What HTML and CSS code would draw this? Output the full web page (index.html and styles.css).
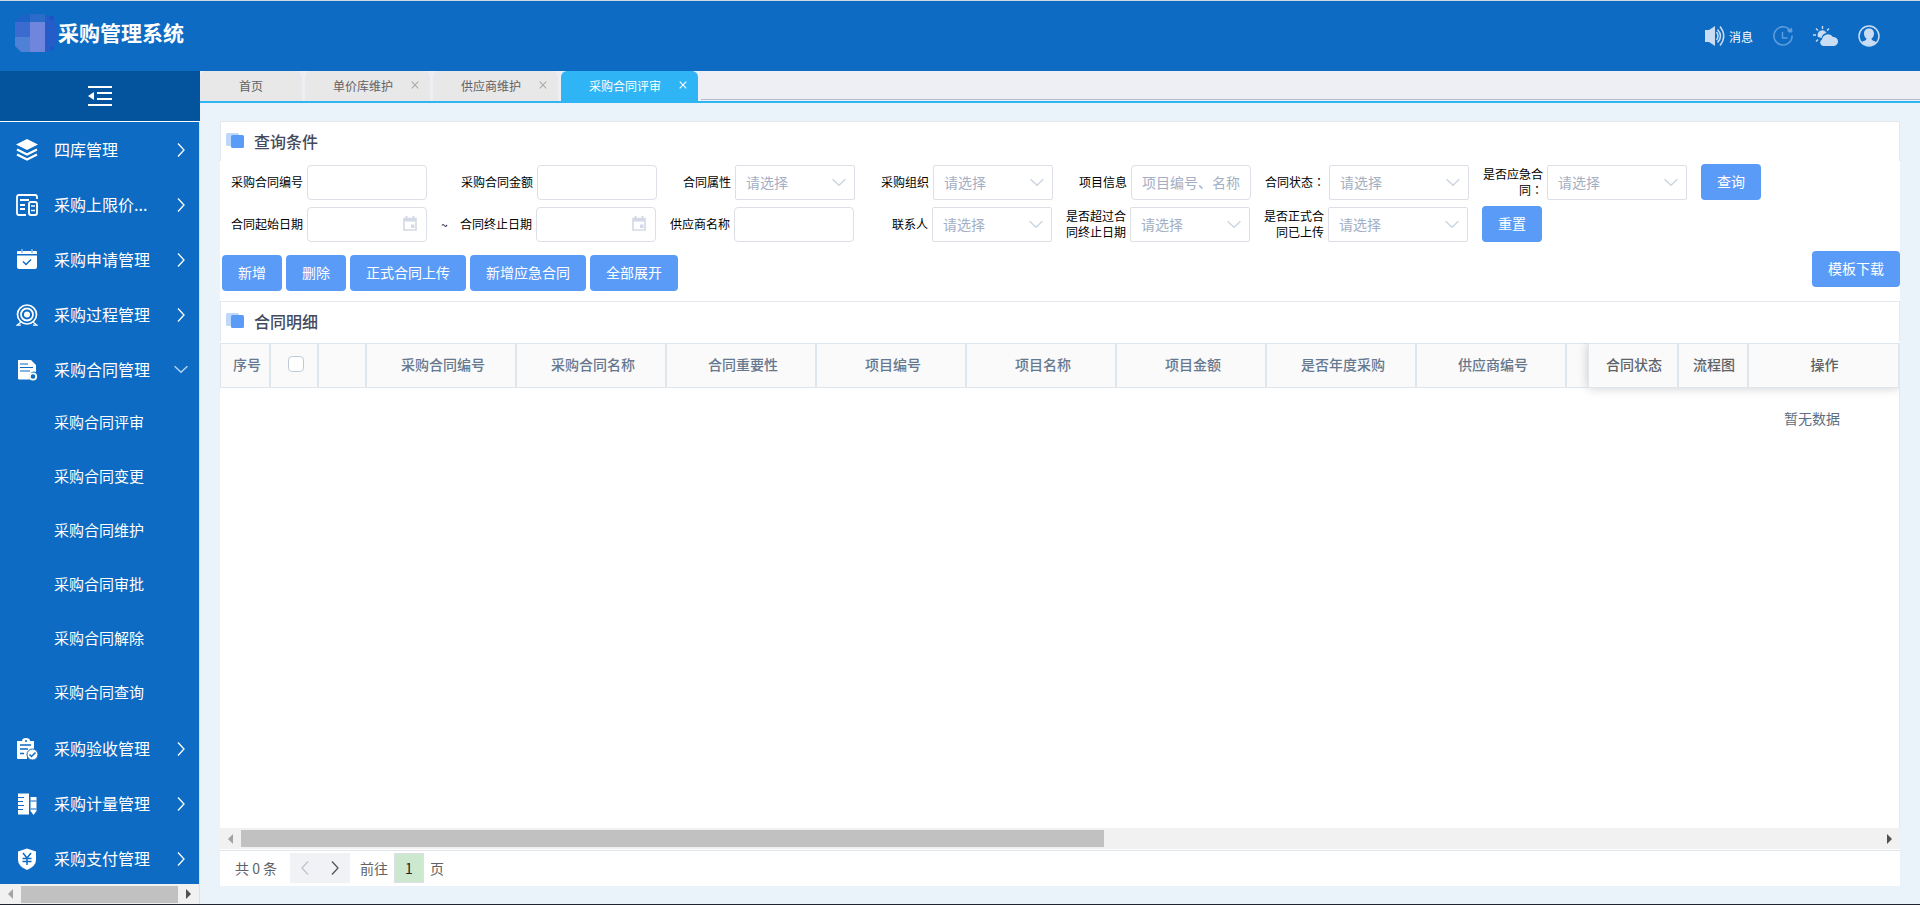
FILE: index.html
```html
<!DOCTYPE html>
<html lang="zh-CN">
<head>
<meta charset="utf-8">
<title>采购管理系统</title>
<link rel="stylesheet" href="styles.css">
</head>
<body>
<svg class="defs" width="0" height="0" aria-hidden="true">
  <symbol id="right" viewBox="0 0 10 16"><path d="M2 1.500L8 8L2 14.500" fill="none" stroke="currentColor" stroke-width="1.300"/></symbol>
  <symbol id="down" viewBox="0 0 14 9"><path d="M.6 1.200L7 7.300L13.400 1.200" fill="none" stroke="currentColor" stroke-width="1.500"/></symbol>
  <symbol id="close" viewBox="0 0 8 8"><path d="M.7.7L7.300 7.300M7.300.7L.7 7.300" fill="none" stroke="currentColor" stroke-width="1.100"/></symbol>
  <symbol id="cal" viewBox="0 0 14 15"><path d="M1 2.500h12v11.500H1z" fill="none" stroke="currentColor" stroke-width="1.600"/><path d="M1 2h12v3.500H1zM2.500 0h2v3h-2zM9.500 0h2v3h-2zM8 8.500h3.500V12H8z" fill="currentColor"/></symbol>
  <symbol id="squares" viewBox="0 0 18 15"><rect width="13" height="13" rx="1.500" fill="#bdd8fb"/><rect x="5" y="2" width="13" height="13" rx="1.500" fill="#5b9bf8"/></symbol>
</svg>
<header class="topbar">
  <div class="brand">
    <svg class="logo" width="43" height="38" viewBox="0 0 43 38"><path d="M0 8Q6 0 19 0Q43 1 43 19Q43 34 32 38H6L0 32z" fill="#245cc9"/><path d="M0 8Q6 0 15 0v8z" fill="#1b63c6"/><path d="M15 0h15v8H15z" fill="#2b6bca"/><path d="M34 2h5v4h-5zM36 33h3v3h-3z" fill="#2450c6"/><path d="M0 8h15v15H0z" fill="#3c6bd0"/><path d="M0 23h15v15H6L0 32z" fill="#4f82d6"/><path d="M15 8h15v30H15z" fill="#7086dc"/></svg>
    <h1 class="brand-name">采购管理系统</h1>
  </div>
  <nav class="tools">
    <a class="tool message" href="#"><svg width="20" height="20" viewBox="0 0 20 20"><path d="M0 4h4l6-4v20l-6-4H0z" fill="#c8dcf4"/><path d="M11.500 6q3 4 0 8M12.500 3.500q6 6.500 0 13M15 .5q7.500 9.500 0 19" fill="none" stroke="#c8dcf4" stroke-width="1.500"/></svg>消息</a>
    <a class="tool" href="#" aria-label="历史"><svg width="20" height="20" viewBox="0 0 20 20"><path d="M16.500 3.500a9.100 9.100 0 1 0 2.600 6" fill="none" stroke="#5d9cdd" stroke-width="1.600"/><path d="M14 3q3 1 5-1.500l.5 4.500q-2 1-4.500 0z" fill="#5d9cdd"/><path d="M9.500 6v6h5" fill="none" stroke="#5d9cdd" stroke-width="1.500"/></svg></a>
    <a class="tool" href="#" aria-label="天气"><svg width="25" height="20" viewBox="0 0 25 20"><path d="M5 11a4.500 4.500 0 1 1 8.500-4q-4 .5-5 5z" fill="#c8dcf4"/><path d="M9.500 0v3M3 2.500l2 2M0 9h3M16 2.500l-2 2M3 15.500l2-2" stroke="#c8dcf4" stroke-width="1.400"/><path d="M10 20a3.500 3.500 0 0 1-1-6.500 6 6 0 0 1 11-2.500 4.500 4.500 0 0 1 1 9z" fill="#c8dcf4"/></svg></a>
    <a class="tool" href="#" aria-label="用户"><svg width="22" height="22" viewBox="0 0 22 22"><circle cx="11" cy="11" r="10" fill="none" stroke="#c8dcf4" stroke-width="1.500"/><path d="M11 3.500c-3 0-5 2-5 5 0 2.500 1 4 2.500 5 0 2-3 2.500-5 3.500A9.500 9.500 0 0 0 18.500 17c-2-1-5-1.500-5-3.500C15 12.500 16 11 16 8.500c0-3-2-5-5-5z" fill="#c8dcf4"/></svg></a>
  </nav>
</header>
<div class="shell">
  <aside class="side">
    <button class="toggle" type="button" aria-label="收起菜单"><svg width="24" height="20" viewBox="0 0 24 20"><path d="M0 1h24M9 7h15M9 13h15M0 19h24" stroke="#fff" stroke-width="1.800"/><path d="M0 10l6-4v8z" fill="#fff"/></svg></button>
    <nav class="menu">
      <a class="item" href="#"><svg class="mi" viewBox="0 0 22 22"><path d="M11 0l11 5.500L11 11 0 5.500z" fill="#fff"/><path d="M1 10.500l10 5 10-5M1 15.500l10 5 10-5" fill="none" stroke="#fff" stroke-width="2.300"/></svg><span class="name">四库管理</span><svg class="go"><use href="#right"/></svg></a>
      <a class="item" href="#"><svg class="mi" viewBox="0 0 22 22"><path d="M21 5V3q0-2-2-2H3Q1 1 1 3v16q0 2 2 2h7M4 6h9M4 11h5M4 15h5" fill="none" stroke="#fff" stroke-width="1.800"/><rect x="13" y="8" width="8" height="13" rx="2" fill="none" stroke="#fff" stroke-width="1.900"/><path d="M15 12h4M15 16.500h4" stroke="#fff" stroke-width="1.600"/></svg><span class="name">采购上限价...</span><svg class="go"><use href="#right"/></svg></a>
      <a class="item" href="#"><svg class="mi" viewBox="0 0 22 22"><path d="M1 3q0-1 1-1h18q1 0 1 1v2H1zM1 6.500h20V18q0 2-2 2H3q-2 0-2-2z" fill="#fff"/><path d="M6 0v4M16 0v4" stroke="#8cb8e6" stroke-width="1.500"/><path d="M7 12.500l3 3 5-5" fill="none" stroke="#0d6bc3" stroke-width="1.500"/></svg><span class="name">采购申请管理</span><svg class="go"><use href="#right"/></svg></a>
      <a class="item" href="#"><svg class="mi" viewBox="0 0 22 22"><g fill="none" stroke="#fff"><circle cx="11" cy="10.500" r="9.500" stroke-width="1.700"/><circle cx="11" cy="10.500" r="6" stroke-width="1.800"/><path d="M5 18l-4 3.200h4M17 18l4 3.200h-4" stroke-width="1.300"/></g><circle cx="11" cy="10.500" r="3" fill="#fff"/></svg><span class="name">采购过程管理</span><svg class="go"><use href="#right"/></svg></a>
      <a class="item" href="#"><svg class="mi" viewBox="0 0 22 22"><path d="M2 1h13l5 5v7a5 5 0 0 0-6 7.500H3q-1 0-1-1z" fill="#fff"/><path d="M4 5h8M4 8.500h13M4 12h10" stroke="#0d6bc3" stroke-width="1.200"/><circle cx="17" cy="17.500" r="3.200" fill="none" stroke="#fff" stroke-width="1.800"/></svg><span class="name">采购合同管理</span><svg class="go open"><use href="#down"/></svg></a>
      <div class="submenu">
        <a class="sub" href="#">采购合同评审</a>
        <a class="sub" href="#">采购合同变更</a>
        <a class="sub" href="#">采购合同维护</a>
        <a class="sub" href="#">采购合同审批</a>
        <a class="sub" href="#">采购合同解除</a>
        <a class="sub" href="#">采购合同查询</a>
      </div>
      <a class="item" href="#"><svg class="mi" viewBox="0 0 22 22"><path d="M1 3h5q0-3 4-3t4 3h4v8l-7 5v5H2q-1 0-1-1z" fill="#fff"/><path d="M4 7h11M4 11h8M4 15.500h4" stroke="#0d6bc3" stroke-width="1.500"/><circle cx="10" cy="3" r="1" fill="#0d6bc3"/><circle cx="16.500" cy="16.500" r="5.500" fill="#fff" stroke="#0d6bc3"/><path d="M13.500 16.500l2 2 4-4" fill="none" stroke="#0d6bc3" stroke-width="1.500"/></svg><span class="name">采购验收管理</span><svg class="go"><use href="#right"/></svg></a>
      <a class="item" href="#"><svg class="mi" viewBox="0 0 22 22"><path d="M2 .5h11v21H2zM14.500 4h6v14l-3 4-3-4z" fill="#fff"/><path d="M2 4.500h6M2 8.500h5M2 12.500h6M2 16.500h5M14.500 8h6M14.500 16h6" stroke="#0d6bc3" stroke-width="1.200"/></svg><span class="name">采购计量管理</span><svg class="go"><use href="#right"/></svg></a>
      <a class="item" href="#"><svg class="mi" viewBox="0 0 22 22"><path d="M11 .5l9 3V12q0 6-9 10Q2 18 2 12V3.500z" fill="#fff"/><path d="M7 5l4 5 4-5M6.500 10.500h9M6.500 13.500h9M11 10v7" fill="none" stroke="#0d6bc3" stroke-width="1.500"/></svg><span class="name">采购支付管理</span><svg class="go"><use href="#right"/></svg></a>
    </nav>
    <div class="scroll"><span class="arrow left"></span><span class="track"><span class="thumb side-thumb"></span></span><span class="arrow next"></span></div>
  </aside>
  <main class="main">
    <nav class="tabs">
      <a class="tab home" href="#">首页</a>
      <a class="tab" href="#">单价库维护<svg class="x"><use href="#close"/></svg></a>
      <a class="tab" href="#">供应商维护<svg class="x"><use href="#close"/></svg></a>
      <a class="tab active" href="#">采购合同评审<svg class="x"><use href="#close"/></svg></a>
      <span class="rest"></span>
    </nav>
    <section class="page">
      <h2 class="title"><svg class="mark"><use href="#squares"/></svg><span class="title-text">查询条件</span></h2>
      <form class="filters">
        <div class="row">
          <div class="field"><label class="label" for="f1">采购合同编号</label><input class="box" id="f1" type="text"></div>
          <div class="field"><label class="label wide" for="f2">采购合同金额</label><input class="box" id="f2" type="text"></div>
          <div class="field"><label class="label" for="f3">合同属性</label><span class="pick"><select class="box" id="f3"><option>请选择</option></select><svg class="caret"><use href="#down"/></svg></span></div>
          <div class="field"><label class="label" for="f4">采购组织</label><span class="pick"><select class="box" id="f4"><option>请选择</option></select><svg class="caret"><use href="#down"/></svg></span></div>
          <div class="field"><label class="label" for="f5">项目信息</label><input class="box" id="f5" type="text" placeholder="项目编号、名称"></div>
          <div class="field"><label class="label" for="f6" lang="zh-Hant">合同状态：</label><span class="pick long"><select class="box" id="f6"><option>请选择</option></select><svg class="caret"><use href="#down"/></svg></span></div>
          <div class="field"><label class="label fixed" for="f7" lang="zh-Hant">是否应急合同：</label><span class="pick long"><select class="box" id="f7"><option>请选择</option></select><svg class="caret"><use href="#down"/></svg></span></div>
          <button class="btn" type="button">查询</button>
        </div>
        <div class="row">
          <div class="field"><label class="label" for="g1">合同起始日期</label><span class="pick"><input class="box" id="g1" type="text"><svg class="date"><use href="#cal"/></svg></span></div>
          <span class="tilde">~</span>
          <div class="field"><label class="label" for="g2">合同终止日期</label><span class="pick"><input class="box" id="g2" type="text"><svg class="date"><use href="#cal"/></svg></span></div>
          <div class="field"><label class="label" for="g3">供应商名称</label><input class="box" id="g3" type="text"></div>
          <div class="field"><label class="label" for="g4">联系人</label><span class="pick"><select class="box" id="g4"><option>请选择</option></select><svg class="caret"><use href="#down"/></svg></span></div>
          <div class="field"><label class="label fixed" for="g5">是否超过合同终止日期</label><span class="pick"><select class="box" id="g5"><option>请选择</option></select><svg class="caret"><use href="#down"/></svg></span></div>
          <div class="field"><label class="label fixed" for="g6">是否正式合同已上传</label><span class="pick long"><select class="box" id="g6"><option>请选择</option></select><svg class="caret"><use href="#down"/></svg></span></div>
          <button class="btn" type="button">重置</button>
        </div>
      </form>
      <div class="actions">
        <button class="btn" type="button">新增</button>
        <button class="btn" type="button">删除</button>
        <button class="btn" type="button">正式合同上传</button>
        <button class="btn" type="button">新增应急合同</button>
        <button class="btn" type="button">全部展开</button>
        <button class="btn template" type="button">模板下载</button>
      </div>
      <h2 class="title"><svg class="mark"><use href="#squares"/></svg><span class="title-text">合同明细</span></h2>
      <div class="grid">
        <div class="heads">
          <div class="scrolled">
            <table class="table">
              <colgroup><col class="c50"><col class="c48"><col class="c48"><col span="9" class="c150"></colgroup>
              <thead><tr><th>序号</th><th><input class="check" type="checkbox" aria-label="全选"></th><th></th><th>采购合同编号</th><th>采购合同名称</th><th>合同重要性</th><th>项目编号</th><th>项目名称</th><th>项目金额</th><th>是否年度采购</th><th>供应商编号</th><th></th></tr></thead>
            </table>
          </div>
          <table class="table pinned">
            <colgroup><col class="c90"><col class="c70"><col class="c150"></colgroup>
            <thead><tr><th>合同状态</th><th>流程图</th><th>操作</th></tr></thead>
          </table>
        </div>
        <p class="empty">暂无数据</p>
      </div>
      <div class="scroll"><span class="arrow left"></span><span class="track"><span class="thumb grid-thumb"></span></span><span class="arrow next"></span></div>
      <div class="pager">
        <span class="total">共 0 条</span>
        <span class="pages"><button class="turn off" type="button" aria-label="上一页"><svg class="flip"><use href="#right"/></svg></button><button class="turn" type="button" aria-label="下一页"><svg><use href="#right"/></svg></button></span>
        <label for="page">前往</label><input class="pageno" id="page" type="text" value="1"><span>页</span>
      </div>
    </section>
  </main>
</div>
</body>
</html>
```
FILE: styles.css
```css
* { box-sizing: border-box; }
body {
  margin: 0;
  height: 100vh;
  display: flex;
  flex-direction: column;
  overflow: hidden;
  background: #eaf2fa;
  border-top: 1px solid #cfd9e2;
  border-bottom: 1px solid #20242e;
  font-family: "Noto Sans CJK SC", sans-serif;
  font-size: 14px;
  color: #606266;
}
a { color: inherit; text-decoration: none; }
h1, h2, p { margin: 0; }
button, input, select { font: inherit; }
svg { flex: none; display: block; }
.defs { position: absolute; }

.topbar { height: 70px; flex: none; display: flex; justify-content: space-between; background: #0d6bc3; color: #fff; padding: 0 40px 0 15px; }
.brand { display: flex; align-items: flex-start; padding-top: 13px; }
.brand-name { font-size: 21px; line-height: 36px; font-weight: 700; }
.tools { display: flex; align-items: center; gap: 20px; font-size: 12px; }
.message { display: flex; align-items: center; gap: 4px; }

.shell { flex: 1; min-height: 0; display: flex; }
.side { width: 200px; flex: none; display: flex; flex-direction: column; border-right: 1px solid #d8e2ec; }
.toggle { height: 51px; flex: none; width: 200px; border: 0; border-bottom: 1px solid #fff; background: #04539d; display: flex; align-items: center; justify-content: center; padding: 0; }
.menu { flex: 1; min-height: 0; overflow: hidden; background: #0d6bc3; color: #fff; }
.item { display: flex; align-items: center; height: 55px; padding: 0 13px 0 16px; font-size: 16px; }
.mi { width: 22px; height: 22px; margin-right: 16px; }
.name { flex: 1; padding-bottom: 2px; }
.go { width: 10px; height: 16px; }
.go.open { width: 14px; height: 9px; margin-right: -2px; color: #b5d2ee; }
.sub { display: block; height: 54px; line-height: 50px; padding-left: 54px; font-size: 15px; }

.scroll { height: 21px; flex: none; display: flex; align-items: center; background: #f1f1f1; padding: 0 8px; gap: 8px; }
.side .scroll { height: 20px; }
.arrow { border: 5px solid transparent; }
.arrow.left { border-left: 0; border-right-color: #a3a3a3; }
.arrow.next { border-right: 0; border-left-color: #505050; }
.track { flex: 1; }
.thumb { display: block; height: 17px; background: #c1c1c1; }
.side-thumb { width: 100%; }
.grid-thumb { width: 52.7%; }

.main { flex: 1; min-width: 0; display: flex; flex-direction: column; }
.tabs { height: 32px; flex: none; display: flex; gap: 3px; background: #eeeff5; border-bottom: 2px solid #2fb5f2; font-size: 12px; }
.tab { display: flex; align-items: center; gap: 18px; padding: 0 11px 2px 28px; background: #e8e8e8; border-radius: 6px 6px 0 0; color: #606266; }
.home { padding: 0 39px 2px; }
.x { width: 8px; height: 8px; color: #aaa; }
.active { background: #2fb5f5; color: #fff; }
.active .x { color: #fff; }
.rest { flex: 1; border-bottom: 1px solid #b4bccb; margin-bottom: 1px; }

.page { flex: 1; min-height: 0; margin: 18px 20px; background: #fff; display: flex; flex-direction: column; }
.title { height: 40px; flex: none; display: flex; align-items: center; gap: 10px; padding: 0 0 2px 5px; border: 1px solid #e3e8ee; border-bottom: 0; font-size: 16px; font-weight: 500; color: #444a5c; }
.mark { width: 18px; height: 15px; }
.filters { padding: 3px 11px 0; display: flex; flex-direction: column; gap: 6px; }
.row { display: flex; align-items: center; flex-wrap: wrap; gap: 6px 14px; }
.field { display: flex; align-items: center; gap: 4px; font-size: 12px; line-height: 16px; color: #000; }
.label { min-width: 60px; text-align: right; }
.label.wide { min-width: 92px; }
.label.fixed { width: 60px; }
.tilde { width: 5px; font-size: 12px; color: #000; }
.box { display: block; width: 120px; height: 35px; border: 1px solid #dcdfe6; border-radius: 4px; background: #fff; padding: 0 10px; font-size: 14px; color: #a3afc4; outline: 0; appearance: none; }
.box::placeholder { color: #a3afc4; opacity: 1; }
.pick { position: relative; width: 120px; }
.pick.long { width: 140px; }
.pick .box { width: 100%; }
select.box { border-radius: 2px; }
.caret { position: absolute; right: 9px; top: 13px; width: 14px; height: 9px; color: #ccd5e2; pointer-events: none; }
.date { position: absolute; right: 10px; top: 9px; width: 14px; height: 15px; color: #d3dae6; pointer-events: none; }
.btn { height: 36px; border: 0; border-radius: 4px; background: #5b9bf8; color: #fff; font-size: 14px; line-height: 20px; padding: 0 16px 2px; }
.actions { display: flex; gap: 4px; padding: 9px 0 10px 2px; align-items: flex-end; }
.template { margin: 0 0 4px auto; }

.grid { flex: 1; min-height: 0; overflow: hidden; border-right: 1px solid #e3e8ee; margin-top: 2px; }
.heads { display: flex; }
.scrolled { flex: 1; min-width: 0; overflow: hidden; }
.table { table-layout: fixed; width: 1497px; border-collapse: separate; border-spacing: 0; }
.pinned { position: relative; width: 310px; flex: none; box-shadow: 0 0 10px rgba(0, 0, 0, .2); }
.table th { height: 45px; padding: 0 0 4px 4px; background: #fafafa; border: solid #dfe6ec; border-width: 1px 2px 1px 0; font-weight: 500; color: #66788f; text-align: center; }
.table th:first-child { border-left-width: 1px; }
.pinned th { color: #606266; padding-left: 2px; }
.pinned th:last-child { border-right-width: 1px; }
.c48 { width: 48px; }
.c50 { width: 51px; }
.c70 { width: 70px; }
.c90 { width: 91px; }
.c150 { width: 150px; }
.check { display: block; margin: 0 auto; width: 16px; height: 16px; appearance: none; border: 1px solid #bfcbd9; border-radius: 4px; background: #fff; }
.empty { text-align: right; padding: 20px 59px 0 0; line-height: 20px; color: #5e6d82; }
.pager { height: 36px; flex: none; display: flex; align-items: center; margin-top: 1px; padding: 0 0 2px 15px; border-top: 1px solid #dfe6ec; }
.total { min-width: 45px; }
.pages { display: flex; margin: 0 10px; }
.turn { width: 30px; height: 30px; border: 0; background: #f0f2f6; padding: 0; color: #555; display: flex; align-items: center; justify-content: center; }
.turn svg { width: 10px; height: 16px; }
.turn.off { color: #bfc3cc; }
.flip { transform: rotate(180deg); }
.pageno { width: 30px; height: 30px; margin: 0 6px; border: 1px solid #dcdfe6; background: #cce8cf; color: #222; text-align: center; padding: 0; }
```
